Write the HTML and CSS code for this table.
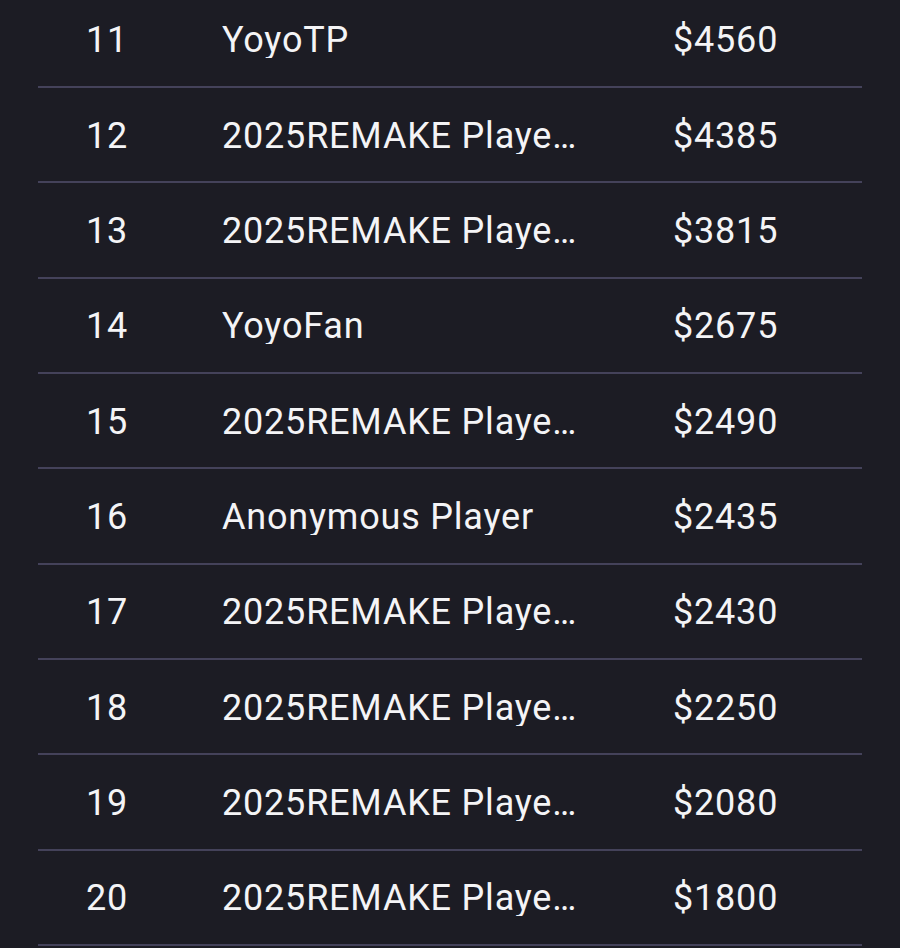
FILE: index.html
```html
<!DOCTYPE html>
<html>
<head>
<meta charset="utf-8">
<link rel="stylesheet" href="styles.css">
</head>
<body>
<div class="board">
  <div class="row"><span class="rank">11</span><span class="name">YoyoTP</span><span class="amount">$4560</span></div>
  <div class="row"><span class="rank">12</span><span class="name">2025REMAKE Player 1234</span><span class="amount">$4385</span></div>
  <div class="row"><span class="rank">13</span><span class="name">2025REMAKE Player 5678</span><span class="amount">$3815</span></div>
  <div class="row"><span class="rank">14</span><span class="name">YoyoFan</span><span class="amount">$2675</span></div>
  <div class="row"><span class="rank">15</span><span class="name">2025REMAKE Player 9012</span><span class="amount">$2490</span></div>
  <div class="row"><span class="rank">16</span><span class="name">Anonymous Player</span><span class="amount">$2435</span></div>
  <div class="row"><span class="rank">17</span><span class="name">2025REMAKE Player 3456</span><span class="amount">$2430</span></div>
  <div class="row"><span class="rank">18</span><span class="name">2025REMAKE Player 7890</span><span class="amount">$2250</span></div>
  <div class="row"><span class="rank">19</span><span class="name">2025REMAKE Player 2468</span><span class="amount">$2080</span></div>
  <div class="row"><span class="rank">20</span><span class="name">2025REMAKE Player 1357</span><span class="amount">$1800</span></div>
</div>
</body>
</html>
```
FILE: styles.css
```css
html, body {
  margin: 0;
  padding: 0;
  background: #1c1c24;
  height: 100%;
  overflow: hidden;
}
.board {
  margin: -7.4px 38px 0;
  font-family: Roboto, "Noto Sans", sans-serif;
  font-size: 36px;
  letter-spacing: 0.8px;
  color: #f4f4f6;
}
.row {
  display: grid;
  grid-template-columns: 136px 360px 1fr;
  align-items: center;
  height: 91.33px;
  padding: 2px 0 0 48px;
  border-bottom: 2px solid #44425a;
}
.rank, .name, .amount {
  line-height: 1;
}
.name {
  white-space: nowrap;
  overflow: hidden;
  text-overflow: ellipsis;
}
.amount {
  padding-left: 91px;
}
```
